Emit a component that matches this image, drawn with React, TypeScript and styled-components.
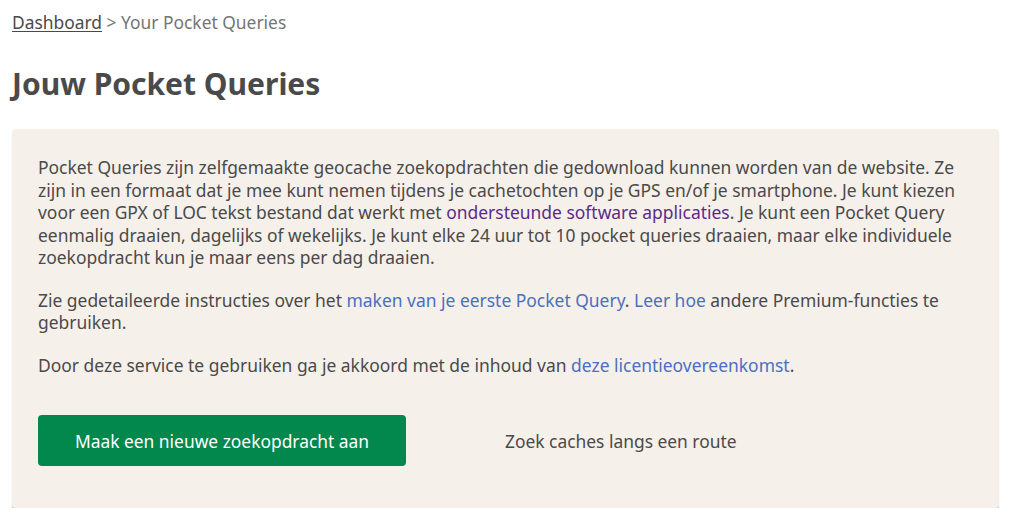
import React from "react";
import styled, { createGlobalStyle } from "styled-components";

const GlobalStyle = createGlobalStyle`
  html, body { margin: 0; padding: 0; background: #ffffff; }
  body {
    font-family: "Noto Sans", "Open Sans", sans-serif;
    color: #4a4a4a;
    font-size: 17.5px;
  }
  * { box-sizing: border-box; }
`;

const Page = styled.div`
  padding: 10px 12px 0 12px;
  width: 1011px;
`;

const Breadcrumb = styled.nav`
  font-size: 17.4px;
  line-height: 24px;
  color: #757575;
`;

const CrumbLink = styled.a`
  color: #4a4a4a;
  text-decoration: underline;
  text-underline-offset: 2px;
`;

const Title = styled.h1`
  margin: 32px 0 0 0;
  font-size: 30px;
  line-height: 36px;
  font-weight: 700;
  color: #4a4a4a;
`;

const Panel = styled.section`
  margin-top: 27px;
  width: 987px;
  background: #f6f0ea;
  border-radius: 4px;
  box-shadow: 0 2px 1px #cfcbc7;
  padding: 27px 35px 42px 26px;
`;

const Para = styled.p`
  margin: 0 0 20px 0;
  font-size: 17.45px;
  line-height: 22.5px;
  color: #4a4a4a;
  &:last-of-type { margin-bottom: 0; }
`;

const Link = styled.a<{ $visited?: boolean }>`
  color: ${(p) => (p.$visited ? "#5b2a8e" : "#4a6fc2")};
  text-decoration: none;
`;

const Actions = styled.div`
  display: flex;
  align-items: center;
  margin-top: 39px;
`;

const PrimaryButton = styled.button`
  width: 368px;
  height: 51px;
  border: none;
  border-radius: 4px;
  background: #02874d;
  color: #ffffff;
  font-family: "Noto Sans", "Open Sans", sans-serif;
  font-size: 17.4px;
  cursor: pointer;
`;

const TextButton = styled.a`
  margin-left: 99px;
  color: #4a4a4a;
  font-size: 17.4px;
  text-decoration: none;
`;

export default function App() {
  return (
    <>
      <GlobalStyle />
      <Page>
        <Breadcrumb>
          <CrumbLink href="#">Dashboard</CrumbLink> &gt; Your Pocket Queries
        </Breadcrumb>
        <Title>Jouw Pocket Queries</Title>
        <Panel>
          <Para>
            Pocket Queries zijn zelfgemaakte geocache zoekopdrachten die gedownload kunnen worden van de website. Ze
            zijn in een formaat dat je mee kunt nemen tijdens je cachetochten op je GPS en/of je smartphone. Je kunt kiezen
            voor een GPX of LOC tekst bestand dat werkt met{" "}
            <Link href="#" $visited>ondersteunde software applicaties</Link>. Je kunt een Pocket Query
            eenmalig draaien, dagelijks of wekelijks. Je kunt elke 24 uur tot 10 pocket queries draaien, maar elke individuele
            zoekopdracht kun je maar eens per dag draaien.
          </Para>
          <Para>
            Zie gedetaileerde instructies over het <Link href="#">maken van je eerste Pocket Query</Link>.{" "}
            <Link href="#">Leer hoe</Link> andere Premium-functies te gebruiken.
          </Para>
          <Para>
            Door deze service te gebruiken ga je akkoord met de inhoud van{" "}
            <Link href="#">deze licentieovereenkomst</Link>.
          </Para>
          <Actions>
            <PrimaryButton>Maak een nieuwe zoekopdracht aan</PrimaryButton>
            <TextButton href="#">Zoek caches langs een route</TextButton>
          </Actions>
        </Panel>
      </Page>
    </>
  );
}
